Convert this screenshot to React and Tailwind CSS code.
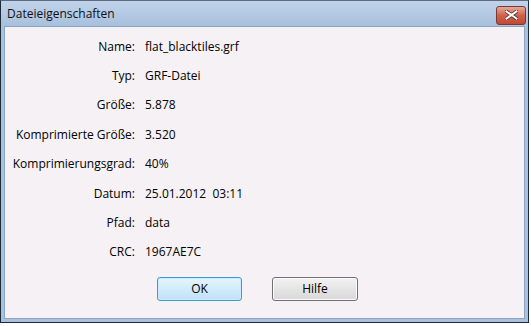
import React from 'react';

const rows = [
  ['Name:', 'flat_blacktiles.grf'],
  ['Typ:', 'GRF-Datei'],
  ['Größe:', '5.878'],
  ['Komprimierte Größe:', '3.520'],
  ['Komprimierungsgrad:', '40%'],
  ['Datum:', '25.01.2012  03:11'],
  ['Pfad:', 'data'],
  ['CRC:', '1967AE7C'],
];

export default function App() {
  return (
    <div className="w-[531px] h-[326px] bg-white overflow-hidden text-[12px] text-black" style={{ fontFamily: '"Open Sans", "Noto Sans", sans-serif' }}>
      <div className="w-[529px] h-[323px] flex flex-col border border-[#1d2a3a] border-t-[#5a6a80] bg-[#a9c1de]">
        {/* title bar */}
        <div className="h-[25px] flex items-center justify-between pl-[6px] pr-[2px] bg-gradient-to-b from-[#c0d3ea] to-[#a8c0dd]">
          <span className="text-[12px] text-[#111] leading-none">Dateieigenschaften</span>
          <div className="w-[30px] h-[19px] mt-[3px] rounded-[3px] border border-[#7a3a30] bg-gradient-to-b from-[#e8a898] via-[#d0604c] to-[#c04a34] flex items-center justify-center">
            <svg width="13" height="10" viewBox="0 0 13 10">
              <path d="M1.5 1.5 L11.5 8.5 M11.5 1.5 L1.5 8.5" stroke="#4a2a26" strokeWidth="3.4" strokeLinecap="square" />
              <path d="M1.5 1.5 L11.5 8.5 M11.5 1.5 L1.5 8.5" stroke="#fff" strokeWidth="2" strokeLinecap="square" />
            </svg>
          </div>
        </div>
        {/* client */}
        <div className="flex-1 mx-[3px] mb-[3px] border border-[#8aa4c4] bg-[#f5f1f5] flex flex-col">
          <div className="flex flex-col pt-[5px]">
            {rows.map(([label, value]) => (
              <div key={label} className="flex h-[29.4px] items-center">
                <span className="w-[130px] text-right whitespace-nowrap">{label}</span>
                <span className="ml-[10px] whitespace-pre">{value}</span>
              </div>
            ))}
          </div>
          <div className="flex gap-[30px] pl-[152px] mt-[10px]">
            <button className="w-[85px] h-[24px] rounded-[3px] border border-[#3c9bd6] bg-gradient-to-b from-[#e6f4fc] to-[#bfe2f8] shadow-[inset_0_0_0_1px_#c8ecfc]">OK</button>
            <button className="w-[86px] h-[24px] rounded-[3px] border border-[#707070] bg-gradient-to-b from-[#f2f2f2] to-[#d8d8d8] shadow-[inset_0_0_0_1px_#fcfcfc]">Hilfe</button>
          </div>
        </div>
      </div>
    </div>
  );
}
